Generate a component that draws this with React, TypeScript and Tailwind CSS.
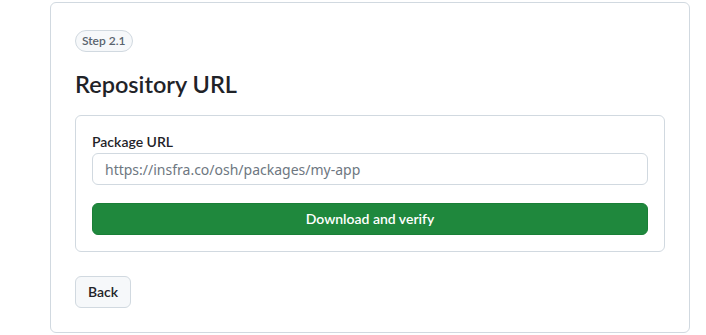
import React from 'react';

export default function App() {
  return (
    <div
      className="min-h-screen bg-white pl-[50px] pt-[2px]"
      style={{ fontFamily: 'Lato, "Liberation Sans", sans-serif' }}
    >
      <div className="w-[640px] rounded-md border border-[#d1d9e0] bg-white p-6">
        {/* Step badge */}
        <span className="inline-flex h-[22px] items-center rounded-full border border-[#d1d9e0] bg-[#f6f8fa] px-[6px] text-xs font-semibold text-[#59636e]">
          Step 2.1
        </span>

        <h2 className="mt-4 text-[23.5px] font-semibold leading-8 text-[#1f2328]">Repository URL</h2>

        {/* Form box */}
        <div className="mt-[15px] rounded-md border border-[#d1d9e0] p-4">
          <label className="block text-sm font-semibold leading-5 text-[#1f2328]">Package URL</label>
          <input
            type="text"
            placeholder="https://insfra.co/osh/packages/my-app"
            className="mt-[1px] h-8 w-full rounded-md border border-[#d1d9e0] bg-white px-3 font-['Noto_Sans',sans-serif] text-sm text-[#1f2328] placeholder:text-[#6e7781] outline-none"
          />
          <button className="mt-[18px] h-8 w-full rounded-md border border-[#1a7f37] bg-[#1f883d] text-sm font-semibold text-white">
            Download and verify
          </button>
        </div>

        <button className="mt-6 h-8 rounded-md border border-[#d1d9e0] bg-[#f6f8fa] px-3 text-sm font-semibold text-[#1f2328]">
          Back
        </button>
      </div>
    </div>
  );
}
